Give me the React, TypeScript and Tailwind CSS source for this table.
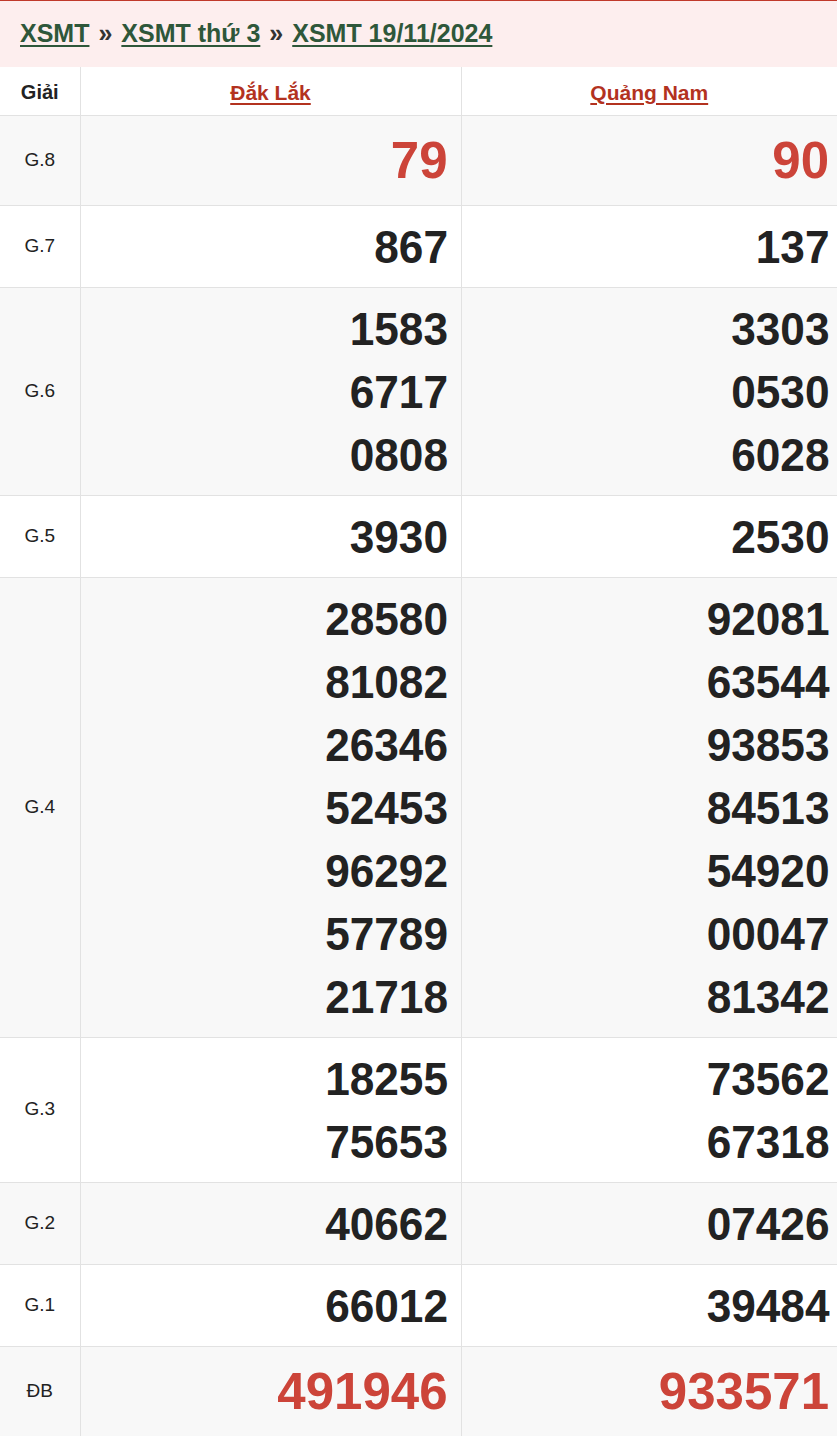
const rows: { label: string; a: string[]; b: string[]; big?: boolean; gray: boolean }[] = [
  { label: "G.8", a: ["79"], b: ["90"], big: true, gray: true },
  { label: "G.7", a: ["867"], b: ["137"], gray: false },
  { label: "G.6", a: ["1583", "6717", "0808"], b: ["3303", "0530", "6028"], gray: true },
  { label: "G.5", a: ["3930"], b: ["2530"], gray: false },
  {
    label: "G.4",
    a: ["28580", "81082", "26346", "52453", "96292", "57789", "21718"],
    b: ["92081", "63544", "93853", "84513", "54920", "00047", "81342"],
    gray: true,
  },
  { label: "G.3", a: ["18255", "75653"], b: ["73562", "67318"], gray: false },
  { label: "G.2", a: ["40662"], b: ["07426"], gray: true },
  { label: "G.1", a: ["66012"], b: ["39484"], gray: false },
  { label: "ĐB", a: ["491946"], b: ["933571"], big: true, gray: true },
];

const Numbers = ({ list, big }: { list: string[]; big?: boolean }) => (
  <>
    {list.map((n) => (
      <div
        key={n}
        className={
          big
            ? "text-[51px] leading-[71px] font-bold text-[#cc4439]"
            : "text-[47px] leading-[63px] font-bold text-[#222] origin-right scale-x-[0.94]"
        }
      >
        {n}
      </div>
    ))}
  </>
);

export default function App() {
  return (
    <div className="w-[837px] bg-white font-['Liberation_Sans',Arial,sans-serif] text-[#222]">
      {/* breadcrumb */}
      <div className="h-[67px] border-t border-[#c0392b] bg-[#fdeeee] px-[20px] flex items-center text-[25px] font-bold">
        <a href="#" className="text-[#2e573a] underline decoration-2 underline-offset-[3px]">XSMT</a>
        <span className="px-[9px] text-[#333]">»</span>
        <a href="#" className="text-[#2e573a] underline decoration-2 underline-offset-[3px]">XSMT thứ 3</a>
        <span className="px-[9px] text-[#333]">»</span>
        <a href="#" className="text-[#2e573a] underline decoration-2 underline-offset-[3px]">XSMT 19/11/2024</a>
      </div>

      <table className="w-full table-fixed border-collapse">
        <colgroup>
          <col className="w-[80px]" />
          <col className="w-[381px]" />
          <col className="w-[376px]" />
        </colgroup>
        <thead>
          <tr className="h-[48px]">
            <th className="border-r border-b border-[#e2e2e2] text-[20px] font-bold pt-[3px]">Giải</th>
            <th className="border-r border-b border-[#e2e2e2] text-[21px] font-bold pt-[3px]">
              <a href="#" className="text-[#b3321f] underline decoration-2 underline-offset-[3px]">Đắk Lắk</a>
            </th>
            <th className="border-b border-[#e2e2e2] text-[21px] font-bold pt-[3px]">
              <a href="#" className="text-[#b3321f] underline decoration-2 underline-offset-[3px]">Quảng Nam</a>
            </th>
          </tr>
        </thead>
        <tbody>
          {rows.map((r) => (
            <tr key={r.label} className={r.gray ? "bg-[#f8f8f8]" : "bg-white"}>
              <td className="border-r border-b border-[#e2e2e2] text-center text-[19px] align-middle">{r.label}</td>
              <td className="border-r border-b border-[#e2e2e2] text-right pr-[13px] py-[9px]">
                <Numbers list={r.a} big={r.big} />
              </td>
              <td className="border-b border-[#e2e2e2] text-right pr-[8px] py-[9px]">
                <Numbers list={r.b} big={r.big} />
              </td>
            </tr>
          ))}
        </tbody>
      </table>
    </div>
  );
}
